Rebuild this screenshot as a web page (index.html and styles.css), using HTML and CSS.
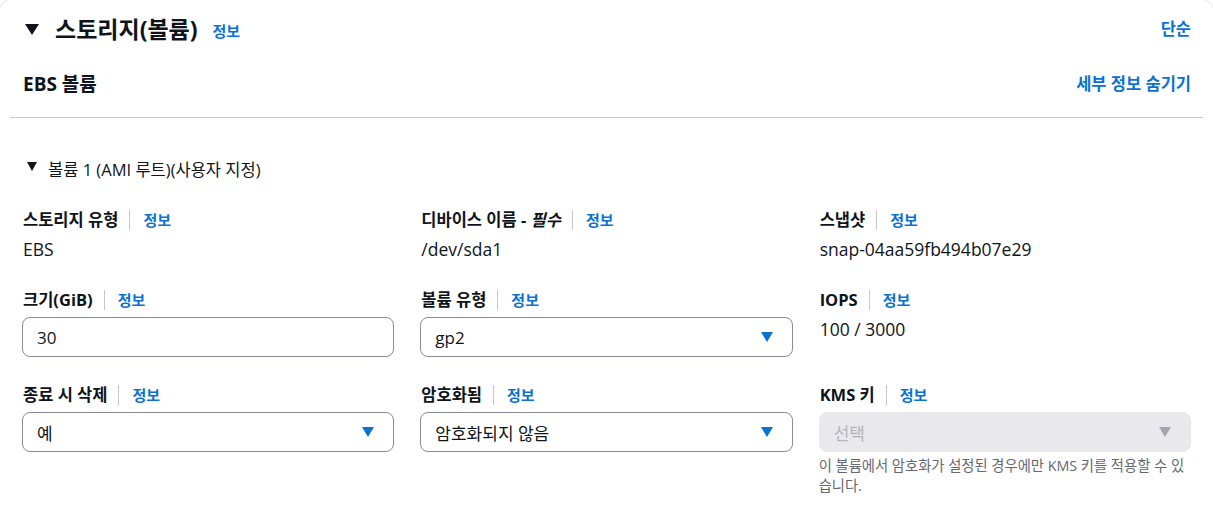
FILE: index.html
```html
<!DOCTYPE html>
<html lang="ko">
<head>
<meta charset="utf-8">
<link rel="stylesheet" href="styles.css">
</head>
<body>
<div class="card">
  <div class="head">
    <div class="title-row">
      <span class="caret-lg"></span>
      <h2 class="title">스토리지(볼륨)</h2>
      <a class="info">정보</a>
      <span class="grow"></span>
      <a class="action">단순</a>
    </div>
    <div class="sub-row">
      <h3 class="subtitle">EBS 볼륨</h3>
      <span class="grow"></span>
      <a class="action">세부 정보 숨기기</a>
    </div>
  </div>
  <div class="divider"></div>
  <div class="content">
    <div class="expander"><span class="caret-sm"></span><span>볼륨 1 (AMI 루트)(사용자 지정)</span></div>
    <div class="grid">
      <div class="field">
        <div class="label"><span class="lt">스토리지 유형</span><span class="sep"></span><a class="info">정보</a></div>
        <div class="value">EBS</div>
      </div>
      <div class="field">
        <div class="label"><span class="lt">디바이스 이름 - <i>필수</i></span><span class="sep"></span><a class="info">정보</a></div>
        <div class="value">/dev/sda1</div>
      </div>
      <div class="field">
        <div class="label"><span class="lt">스냅샷</span><span class="sep"></span><a class="info">정보</a></div>
        <div class="value">snap-04aa59fb494b07e29</div>
      </div>

      <div class="field">
        <div class="label"><span class="lt">크기(GiB)</span><span class="sep"></span><a class="info">정보</a></div>
        <div class="input">30</div>
      </div>
      <div class="field">
        <div class="label"><span class="lt">볼륨 유형</span><span class="sep"></span><a class="info">정보</a></div>
        <div class="input select"><span>gp2</span><span class="tri"></span></div>
      </div>
      <div class="field">
        <div class="label"><span class="lt">IOPS</span><span class="sep"></span><a class="info">정보</a></div>
        <div class="value">100 / 3000</div>
      </div>

      <div class="field">
        <div class="label"><span class="lt">종료 시 삭제</span><span class="sep"></span><a class="info">정보</a></div>
        <div class="input select"><span>예</span><span class="tri"></span></div>
      </div>
      <div class="field">
        <div class="label"><span class="lt">암호화됨</span><span class="sep"></span><a class="info">정보</a></div>
        <div class="input select"><span>암호화되지 않음</span><span class="tri"></span></div>
      </div>
      <div class="field">
        <div class="label"><span class="lt">KMS 키</span><span class="sep"></span><a class="info">정보</a></div>
        <div class="input select disabled"><span>선택</span><span class="tri"></span></div>
        <div class="help">이 볼륨에서 암호화가 설정된 경우에만 KMS 키를 적용할 수 있습니다.</div>
      </div>
    </div>
  </div>
</div>
</body>
</html>
```
FILE: styles.css
```css
* { box-sizing: border-box; }
html, body { margin: 0; padding: 0; background: #ffffff; }
body {
  font-family: "Open Sans", "Noto Sans CJK KR", sans-serif;
  color: #0f141a;
  font-size: 17.5px;
}
.card {
  margin: -1px -1px 0 -1px;
  border-radius: 14px;
  box-shadow: 0 0 1px 0 rgba(0, 0, 0, 0.35);
  background: #fff;
  min-height: 520px;
}
.head { padding: 14px 23px 0 24px; }
.title-row { display: flex; align-items: center; height: 32px; }
.caret-lg {
  width: 0; height: 0;
  border-left: 7px solid transparent;
  border-right: 7px solid transparent;
  border-top: 11px solid #0f141a;
  margin: 0 16px 0 2px;
}
.title { margin: 0; font-size: 23px; font-weight: 700; line-height: 30px; }
.info {
  color: #0972d3;
  font-size: 15px;
  font-weight: 700;
  line-height: 20px;
}
.title-row .info { margin-left: 15px; padding-top: 4px; }
.grow { flex: 1; }
.action { color: #0972d3; font-size: 16.5px; font-weight: 700; line-height: 22px; }
.sub-row { display: flex; align-items: center; margin-top: 25px; height: 28px; }
.subtitle { margin: 0; font-size: 19px; font-weight: 700; line-height: 26px; }
.divider { height: 1px; background: #c6c6cd; margin: 19px 11px 0 11px; }
.content { padding: 41px 23px 20px 23px; }
.expander { display: flex; align-items: center; font-size: 16.5px; line-height: 22px; height: 22px; }
.caret-sm {
  width: 0; height: 0;
  border-left: 5.5px solid transparent;
  border-right: 5.5px solid transparent;
  border-top: 9px solid #0f141a;
  margin: -8px 11px 0 5px;
}
.grid {
  display: grid;
  grid-template-columns: repeat(3, 1fr);
  column-gap: 26px;
  row-gap: 26px;
  margin-top: 27px;
}
.field { display: flex; flex-direction: column; }
.label { display: flex; align-items: center; height: 24px; padding-left: 1px; }
.lt { font-size: 16.5px; font-weight: 700; line-height: 24px; }
.lt i { font-style: italic; }
.sep { width: 1px; height: 20px; background: #c6c6cd; margin: 0 13px 0 11px; }
.value { font-size: 17.5px; line-height: 26px; margin-top: 4px; padding-left: 1px; }
.input {
  margin-top: 5px;
  height: 40px;
  border: 1px solid #8c8c94;
  border-radius: 8px;
  padding: 0 14px;
  display: flex;
  align-items: center;
  font-size: 17px;
}
.select { justify-content: space-between; }
.tri {
  width: 0; height: 0;
  border-left: 6px solid transparent;
  border-right: 6px solid transparent;
  border-top: 10px solid #0972d3;
  margin-right: 5px;
}
.disabled { background: #e9e9ed; border-color: #e9e9ed; color: #b4b4bb; }
.disabled .tri { border-top-color: #a4a4ad; }
.help { font-size: 14.3px; line-height: 20px; color: #656871; margin-top: 4px; }
```
